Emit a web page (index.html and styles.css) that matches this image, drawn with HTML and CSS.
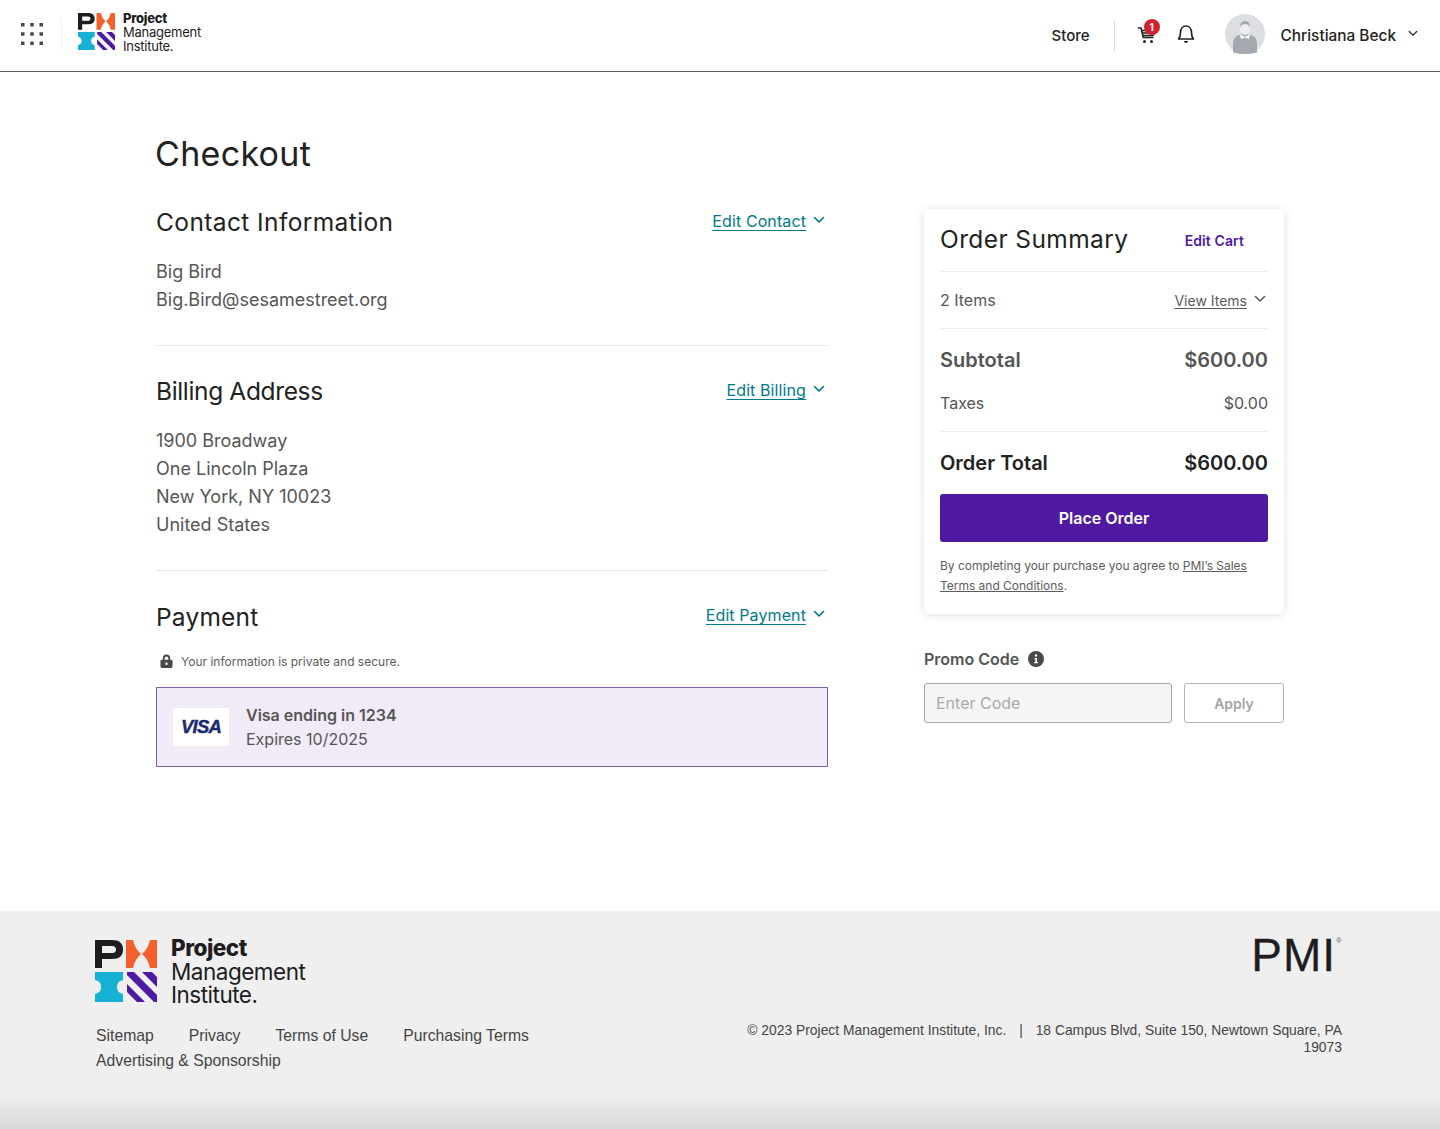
FILE: index.html
```html
<!DOCTYPE html>
<html lang="en">
<head>
<meta charset="utf-8">
<title>Checkout</title>
<link rel="stylesheet" href="styles.css">
</head>
<body>
<svg class="defs" width="0" height="0" aria-hidden="true">
  <symbol id="pmi-mark" viewBox="0 0 62 62">
    <path fill="#1d1d1f" fill-rule="evenodd" d="M0 0h17q11 0 11 9.500t-11 9.500H7v9H0zM7 6v7h10q4 0 4-3.500T17 6z"/>
    <path fill="#f4602b" d="M31 0h7q2 9 8 14-6 5-8 14h-7zM62 0h-7q-2 9-8 14 6 5 8 14h7z"/>
    <path fill="#17b1d3" d="M0 32h28v8c-4 1-6 3-6 7s2 6 6 7v8H0v-8c4-1 6-3 6-7s-2-6-6-7z"/>
    <path fill="#4e1aa2" d="M32 32h7l23 23v7h-3L32 35zM32 44l18 18h-8L32 52zM47 32h10l5 5v10z"/>
  </symbol>
  <symbol id="chev" viewBox="0 0 12 8">
    <path fill="none" stroke="currentColor" stroke-width="1.6" stroke-linecap="round" stroke-linejoin="round" d="M1.500 1.500 6 6l4.500-4.500"/>
  </symbol>
</svg>

<header class="topbar">
  <div class="topbar-left">
    <svg class="grid-icon" viewBox="0 0 22 22" width="22" height="22">
      <g fill="#4a4a4a">
        <rect x="0" y="0" width="3.500" height="3.500"/><rect x="9.250" y="0" width="3.500" height="3.500"/><rect x="18.500" y="0" width="3.500" height="3.500"/>
        <rect x="0" y="9.250" width="3.500" height="3.500"/><rect x="9.250" y="9.250" width="3.500" height="3.500"/><rect x="18.500" y="9.250" width="3.500" height="3.500"/>
        <rect x="0" y="18.500" width="3.500" height="3.500"/><rect x="9.250" y="18.500" width="3.500" height="3.500"/><rect x="18.500" y="18.500" width="3.500" height="3.500"/>
      </g>
    </svg>
    <span class="vsep vsep-light"></span>
    <div class="brand brand-small">
      <svg class="brand-mark"><use href="#pmi-mark"/></svg>
      <div class="brand-text"><b>Project</b><span>Management</span><span>Institute.</span></div>
    </div>
  </div>
  <div class="topbar-right">
    <a class="store">Store</a>
    <span class="vsep"></span>
    <div class="cart">
      <svg viewBox="0 0 20 20" width="20" height="20">
        <path fill="none" stroke="#222" stroke-width="1.600" stroke-linecap="round" stroke-linejoin="round" d="M1.500 3h2.500l2.300 9.500h9.500M4.600 5.500h13L16 10.500H5.800M5.300 8h11.500"/>
        <circle cx="7.500" cy="16.500" r="1.500" fill="#222"/><circle cx="14.500" cy="16.500" r="1.500" fill="#222"/>
      </svg>
      <span class="badge">1</span>
    </div>
    <svg class="bell" viewBox="0 0 20 22" width="20" height="22">
      <path fill="none" stroke="#222" stroke-width="1.700" stroke-linecap="round" stroke-linejoin="round" d="M2.500 16c1.500-1.500 2-3 2-6.500C4.500 5.500 7 3 10 3s5.500 2.500 5.500 6.500c0 3.500.5 5 2 6.500z"/>
      <path fill="#222" d="M8 18h4a2 2 0 0 1-4 0z"/>
    </svg>
    <div class="avatar">
      <svg viewBox="0 0 40 40" width="40" height="40">
        <circle cx="20" cy="20" r="20" fill="#dcdee1"/>
        <path fill="#a4a9b0" d="M8 38.500V30q0-7 5-8.500l4-1.500h6l4 1.500q5 1.500 5 8.500v8.500Q26 40 20 40T8 38.500z"/>
        <path fill="#fff" d="M15 20l5 3 5-3-1 5-4-1.500L16 25z"/>
        <ellipse cx="20" cy="14" rx="5" ry="7" fill="#eceded"/>
        <path fill="#a4a9b0" d="M15 13q0-6 5-6t5 6q-2-3-5-3t-5 3z"/>
      </svg>
    </div>
    <span class="user-name">Christiana Beck</span>
    <svg class="user-chev"><use href="#chev"/></svg>
  </div>
</header>

<main class="page">
  <div class="col-main">
    <h1 class="title">Checkout</h1>

    <section class="section section-contact">
      <div class="section-head">
        <h2>Contact Information</h2>
        <a class="edit">Edit Contact<svg class="chev"><use href="#chev"/></svg></a>
      </div>
      <p class="lines">Big Bird<br>Big.Bird@sesamestreet.org</p>
    </section>

    <section class="section section-billing">
      <div class="section-head">
        <h2>Billing Address</h2>
        <a class="edit">Edit Billing<svg class="chev"><use href="#chev"/></svg></a>
      </div>
      <p class="lines">1900 Broadway<br>One Lincoln Plaza<br>New York, NY 10023<br>United States</p>
    </section>

    <section class="section section-payment">
      <div class="section-head">
        <h2>Payment</h2>
        <a class="edit">Edit Payment<svg class="chev"><use href="#chev"/></svg></a>
      </div>
      <div class="secure">
        <svg viewBox="0 0 14 16" width="13" height="15"><path fill="#4a4a4a" fill-rule="evenodd" d="M3 6V4.500a4 4 0 0 1 8 0V6h1q1.500 0 1.500 1.500v6Q13.500 15 12 15H2Q.5 15 .5 13.500v-6Q.5 6 2 6zm2 0h4V4.500a2 2 0 0 0-4 0z"/><circle cx="7" cy="10.500" r="1.300" fill="#fff"/></svg>
        <span>Your information is private and secure.</span>
      </div>
      <div class="card-box">
        <div class="visa"><span>VISA</span></div>
        <div class="card-text">
          <strong>Visa ending in 1234</strong>
          <span>Expires 10/2025</span>
        </div>
      </div>
    </section>
  </div>

  <aside class="col-side">
    <div class="summary">
      <div class="summary-head">
        <h2>Order Summary</h2>
        <a class="edit-cart">Edit Cart</a>
      </div>
      <div class="row row-items">
        <span>2 Items</span>
        <a class="view-items">View Items<svg class="chev"><use href="#chev"/></svg></a>
      </div>
      <div class="row row-subtotal"><span>Subtotal</span><span class="price">$600.00</span></div>
      <div class="row row-taxes"><span>Taxes</span><span>$0.00</span></div>
      <div class="row row-total"><span>Order Total</span><span class="price">$600.00</span></div>
      <button class="place">Place Order</button>
      <p class="terms">By completing your purchase you agree to <u>PMI’s Sales Terms and Conditions</u>.</p>
    </div>
    <div class="promo-label">
      <span>Promo Code</span>
      <svg viewBox="0 0 16 16" width="16" height="16"><circle cx="8" cy="8" r="8" fill="#4a4a4a"/><circle cx="8" cy="4.500" r="1.200" fill="#fff"/><path fill="#fff" d="M6.500 7H9v4h1v1.300H6.200V11h1.100V8.200h-.8z"/></svg>
    </div>
    <div class="promo">
      <input class="promo-input" placeholder="Enter Code">
      <button class="apply">Apply</button>
    </div>
  </aside>
</main>

<footer class="footer">
  <div class="footer-top">
    <div class="brand brand-large">
      <svg class="brand-mark"><use href="#pmi-mark"/></svg>
      <div class="brand-text"><b>Project</b><span>Management</span><span>Institute.</span></div>
    </div>
    <div class="pmi-word">PMI<sup>®</sup></div>
  </div>
  <div class="footer-bottom">
    <nav class="footer-links">
      <a>Sitemap</a><a>Privacy</a><a>Terms of Use</a><a>Purchasing Terms</a><a>Advertising &amp; Sponsorship</a>
    </nav>
    <p class="legal">© 2023 Project Management Institute, Inc. <i>|</i> 18 Campus Blvd, Suite 150, Newtown Square, PA 19073</p>
  </div>
</footer>
</body>
</html>
```

FILE: styles.css
```css
* { box-sizing: border-box; }
html, body { margin: 0; padding: 0; }
body {
  font-family: Inter, "Liberation Sans", sans-serif;
  color: #222;
  background: #fff;
  width: 1440px;
  height: 1129px;
  overflow: hidden;
}
.defs { position: absolute; }
h1, h2, p { margin: 0; }

/* top bar */
.topbar {
  height: 72px;
  border-bottom: 1px solid #5c5c5c;
  display: flex;
  justify-content: space-between;
  align-items: center;
  padding: 0 21px;
}
.topbar-left, .topbar-right { display: flex; align-items: center; }
.topbar-left { margin-top: -4px; }
.vsep { width: 1px; height: 32px; background: #d9d9d9; }
.vsep-light { background: #eeeeee; margin: 0 16px 0 18px; }
.grid-icon { display: block; }

.brand { display: flex; }
.brand-text { display: flex; flex-direction: column; font-family: Inter, sans-serif; color: #1d1d1f; }
.brand-text b { font-weight: 800; }
.brand-small { gap: 8px; align-items: center; margin-bottom: 4px; }
.brand-small .brand-mark { width: 37px; height: 37px; }
.brand-small .brand-text { font-size: 13px; line-height: 14px; letter-spacing: -.25px; }
.brand-large { gap: 14px; align-items: center; }
.brand-large .brand-mark { width: 62px; height: 62px; }
.brand-large .brand-text { font-size: 22.500px; line-height: 23.500px; letter-spacing: -.5px; }

.store { font-size: 15px; font-weight: 500; margin-right: 24px; }
.cart { position: relative; width: 20px; height: 20px; margin-left: 22px; margin-top: -2px; }
.cart svg { display: block; }
.badge {
  position: absolute;
  left: 7px;
  top: -6px;
  width: 16px;
  height: 16px;
  border-radius: 50%;
  background: #d3202f;
  color: #fff;
  font-size: 10px;
  font-weight: 700;
  line-height: 16px;
  text-align: center;
}
.bell { margin-left: 19px; margin-top: -4px; }
.avatar { width: 40px; height: 40px; margin-left: 29px; margin-top: -4px; }
.avatar svg { display: block; }
.user-name { font-size: 15.400px; font-weight: 500; color: #222; margin-left: 16px; }
.user-chev { width: 10px; height: 7px; margin-left: 12px; margin-right: 1px; margin-top: -4px; color: #333; }

/* page */
.page {
  height: 839px;
  padding: 0 156px;
  display: flex;
  justify-content: space-between;
}
.col-main { width: 672px; }
.col-side { width: 360px; padding-top: 137px; }
.title {
  font-size: 34px;
  font-weight: 400;
  line-height: 44px;
  margin: 60px 0 0 -1px;
  color: #222;
  letter-spacing: .3px;
}
.section { border-bottom: 1px solid #e6e6e6; }
.section-contact { margin-top: 30px; height: 140px; }
.section-billing { margin-top: 29px; height: 196px; }
.section-payment { margin-top: 30px; border-bottom: 0; }
.section-head { display: flex; justify-content: space-between; align-items: flex-start; height: 32px; }
.section-head h2 {
  font-size: 24.500px;
  font-weight: 400;
  line-height: 32px;
  letter-spacing: -.35px;
  color: #222;
}
.section-contact .section-head h2 { letter-spacing: .4px; }
.section-payment .section-head h2 { letter-spacing: .2px; }
.edit {
  font-size: 16px;
  line-height: 24px;
  letter-spacing: .1px;
  color: #007a8a;
  display: flex;
  align-items: center;
  text-decoration: underline;
  text-underline-offset: 3px;
  text-decoration-thickness: 1px;
  margin-top: 3px;
  padding-right: 3px;
}
.section-payment .edit { margin-top: 2px; }
.chev { width: 12px; height: 8px; margin-left: 7px; color: inherit; margin-top: -2px; }
.lines { margin-top: 20px; font-size: 18px; line-height: 28px; color: #555; }

.secure { display: flex; align-items: center; gap: 8px; margin-top: 19px; padding-left: 4px; height: 18px; font-size: 12px; color: #5c5c5c; }
.secure svg { display: block; }
.card-box {
  margin-top: 17px;
  height: 80px;
  background: #f1ebf7;
  border: 1px solid #7e62a8;
  display: flex;
  align-items: center;
  padding-left: 16px;
  gap: 17px;
}
.visa {
  width: 56px;
  height: 38px;
  background: #fff;
  border-radius: 3px;
  display: flex;
  align-items: center;
  justify-content: center;
}
.visa span { font-family: "Liberation Sans", sans-serif; font-style: italic; font-weight: 700; font-size: 18.500px; color: #1a2a72; letter-spacing: -.8px; -webkit-text-stroke: .4px #1a2a72; }
.card-text { display: flex; flex-direction: column; font-size: 16px; line-height: 24px; color: #555; }
.card-text strong { font-weight: 600; font-size: 16px; }

/* summary */
.summary {
  height: 405px;
  border-radius: 6px;
  background: #fff;
  box-shadow: 0 1px 10px rgba(0,0,0,.13);
  padding: 0 16px;
}
.summary-head {
  height: 63px;
  border-bottom: 1px solid #ececec;
  display: flex;
  align-items: center;
  justify-content: space-between;
  padding-right: 24px;
}
.summary-head h2 { font-size: 24.500px; font-weight: 400; line-height: 32px; letter-spacing: .4px; margin-top: -3px; }
.edit-cart { font-size: 14px; font-weight: 600; color: #4f1aa1; letter-spacing: .1px; }
.row { display: flex; justify-content: space-between; align-items: center; color: #555; }
.row-items { height: 57px; border-bottom: 1px solid #ececec; font-size: 16px; }
.view-items { font-size: 14px; color: #5c5c5c; display: flex; align-items: center; text-decoration: underline; text-underline-offset: 2px; text-decoration-thickness: 1px; margin-right: 2px; }
.row-subtotal { height: 62px; font-size: 20px; font-weight: 600; }
.row-taxes { height: 41px; border-bottom: 1px solid #ececec; font-size: 16px; padding-bottom: 17px; }
.row-total { height: 62px; font-size: 20px; font-weight: 600; color: #222; }
.place {
  display: block;
  width: 100%;
  height: 48px;
  border: 0;
  border-radius: 3px;
  background: #4f1aa1;
  color: #fff;
  font: 600 16px Inter, sans-serif;
}
.terms { margin-top: 14px; font-size: 12px; line-height: 20px; color: #5c5c5c; letter-spacing: -.02px; }

.promo-label { display: flex; align-items: center; gap: 9px; margin-top: 35px; font-size: 16px; font-weight: 600; color: #555; height: 20px; }
.promo { display: flex; gap: 12px; margin-top: 14px; }
.promo-input {
  width: 248px;
  height: 40px;
  border: 1px solid #a8a8a8;
  border-radius: 3px;
  background: #f5f5f5;
  padding: 0 11px;
  font: 16px Inter, sans-serif;
}
.promo-input::placeholder { color: #aaa; opacity: 1; }
.apply {
  width: 100px;
  height: 40px;
  border: 1px solid #b5b5b5;
  border-radius: 3px;
  background: #fff;
  color: #a5a5a5;
  font: 600 14px Inter, sans-serif;
}

/* footer */
.footer {
  height: 218px;
  padding: 22px 98px 0 95px;
  background: linear-gradient(#efefef 0, #efefef 182px, #d9d9d9 100%);
}
.footer-top { display: flex; justify-content: space-between; align-items: flex-start; height: 90px; padding-top: 3px; }
.pmi-word { font-family: "Liberation Sans", sans-serif; font-size: 46px; line-height: 38px; letter-spacing: 1px; color: #1d1d1f; display: flex; -webkit-text-stroke: .3px #1d1d1f; }
.pmi-word sup { font-size: 8px; line-height: 10px; letter-spacing: 0; color: #666; margin-left: 0; -webkit-text-stroke: 0; }
.footer-bottom { display: flex; justify-content: space-between; align-items: flex-start; }
.footer-links { width: 470px; display: flex; flex-wrap: wrap; column-gap: 35px; font-family: "Liberation Sans", sans-serif; font-size: 15.750px; line-height: 25px; color: #444; padding-left: 1px; }
.legal { width: 620px; text-align: right; font-family: "Liberation Sans", sans-serif; font-size: 13.870px; line-height: 17px; color: #444; margin-top: -1px; }
.legal i { font-style: normal; margin: 0 9px; }
```
